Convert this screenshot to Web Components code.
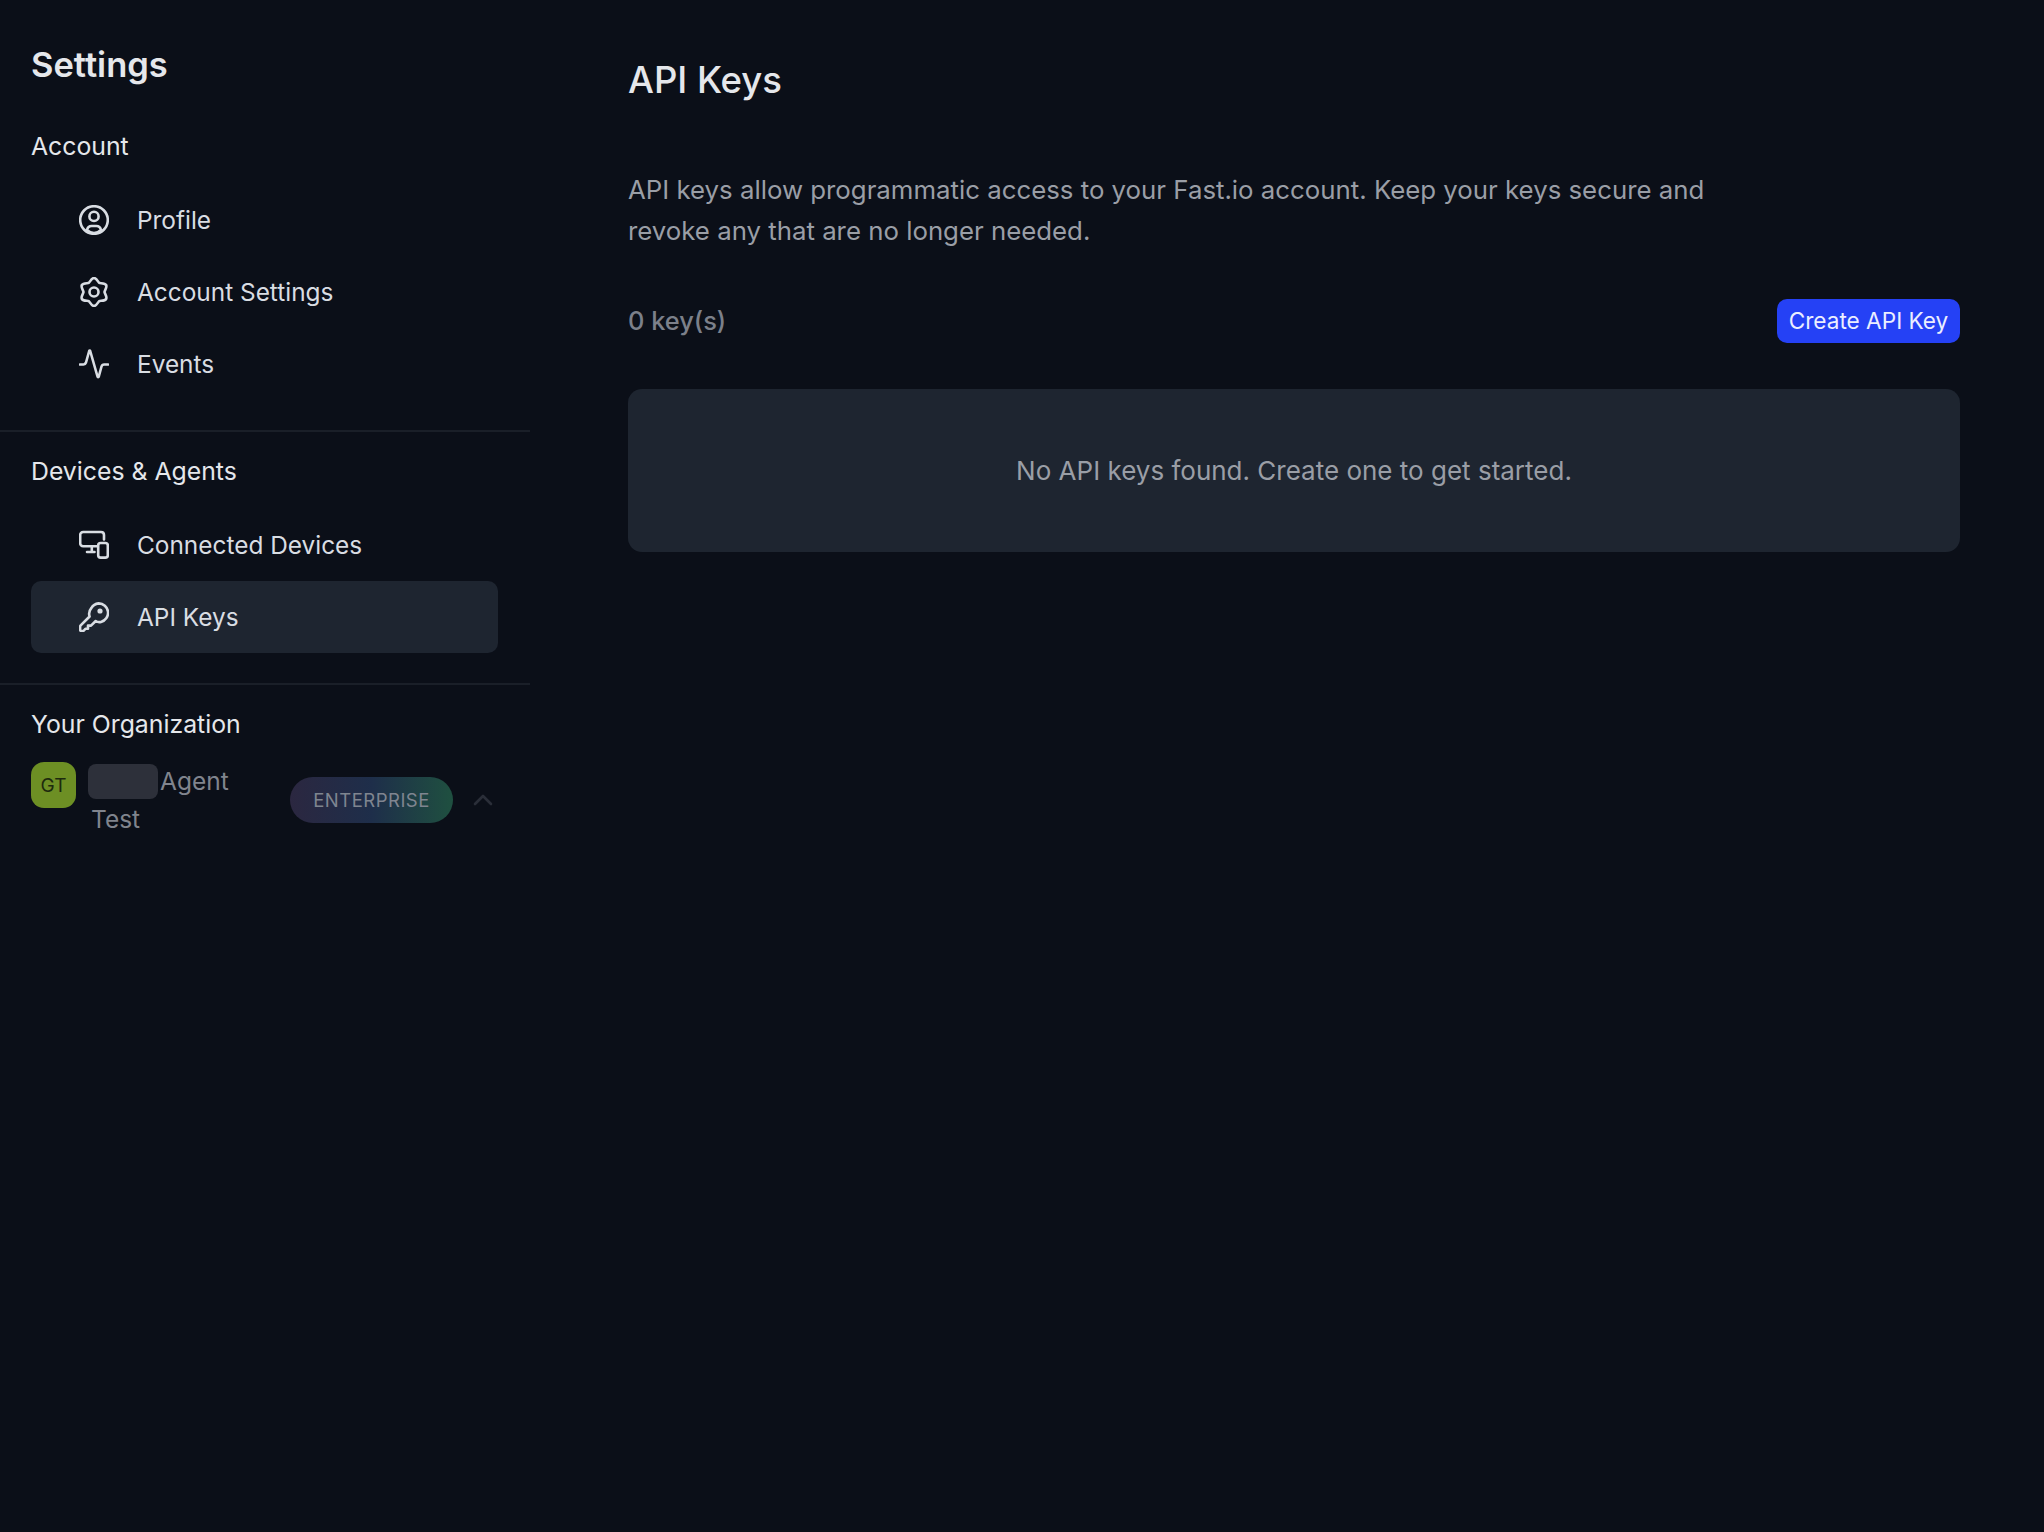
<!DOCTYPE html>
<html>
<head>
<meta charset="utf-8">
<title>API Keys</title>
<style>
  html, body { margin: 0; background: #0b0f18; }
  body { font-family: Inter, "Liberation Sans", sans-serif; color: #e5e7eb; }
</style>
</head>
<body>
<settings-page>
  <settings-sidebar slot="side" heading="Settings">
    <nav-section label="Account">
      <nav-item>
        <svg slot="icon" viewBox="0 0 30 30"><circle cx="15" cy="15" r="13.8"/><circle cx="15" cy="11.4" r="4.6"/><path d="M8 25c.6-2.6 2.4-4 4.6-4h4.8c2.2 0 4 1.4 4.6 4-2 2-4.4 3-7 3s-5-1-7-3z"/></svg>
        Profile
      </nav-item>
      <nav-item>
        <svg slot="icon" viewBox="0 0 30 30"><path d="M15 1C17.6 1 19.21 5.31 20.25 5.91 21.29 6.51 25.82 5.75 27.12 8 28.42 10.25 25.5 13.8 25.5 15 25.5 16.2 28.42 19.75 27.12 22 25.82 24.25 21.29 23.49 20.25 24.09 19.21 24.69 17.6 29 15 29 12.4 29 10.79 24.69 9.75 24.09 8.71 23.49 4.18 24.25 2.88 22 1.58 19.75 4.5 16.2 4.5 15 4.5 13.8 1.58 10.25 2.88 8 4.18 5.75 8.71 6.51 9.75 5.91 10.79 5.31 12.4 1 15 1z"/><circle cx="15" cy="15" r="4.5"/></svg>
        Account Settings
      </nav-item>
      <nav-item>
        <svg slot="icon" viewBox="0 0 30 30"><path d="M1 15.5h3.5c1.2 0 2-.6 2.5-2L10.2 2c.2-.6.8-.6 1 0l7.300 25.5c.2.8 1 .8 1.300 0l2.700-10c.4-1.400 1.200-2 2.600-2H29"/></svg>
        Events
      </nav-item>
    </nav-section>
    <nav-section label="Devices &amp; Agents">
      <nav-item>
        <svg slot="icon" viewBox="0 0 30 30"><path d="M18.5 16.2H4.2c-1.8 0-3-1.2-3-3V5c0-1.800 1.200-3 3-3h17.800c1.800 0 3 1.200 3 3v4.500"/><path d="M8 22h7.500M12.800 16.200V22"/><rect x="19.200" y="13" width="9.600" height="14.600" rx="2.400"/></svg>
        Connected Devices
      </nav-item>
      <nav-item active>
        <svg slot="icon" viewBox="0 0 30 30"><path d="M19.600 1.400a9.400 9.400 0 0 1 2.400 18.500c-1.800.5-3.800.1-5.300-.9L12 23.600h-3v3.200H6.400L4.400 29H2.600c-.9 0-1.500-.6-1.500-1.500v-2.600c0-.6.200-1.100.6-1.500l8.900-8.900c-.9-2.600-.4-5.800 1.700-8.300a9.400 9.400 0 0 1 7.300-4.800z"/><circle cx="21" cy="9" r="1.300" fill="currentColor"/></svg>
        API Keys
      </nav-item>
    </nav-section>
    <nav-section label="Your Organization" last>
      <org-row initials="GT" plan="ENTERPRISE"><span class="name-rest">Agent Test</span></org-row>
    </nav-section>
  </settings-sidebar>
  <api-keys-panel
    heading="API Keys"
    count="0 key(s)"
    action="Create API Key"
    empty="No API keys found. Create one to get started.">
    API keys allow programmatic access to your Fast.io account. Keep your keys secure and revoke any that are no longer needed.
  </api-keys-panel>
</settings-page>

<script>
class SettingsPage extends HTMLElement {
  constructor() {
    super();
    this.attachShadow({ mode: 'open' });
  }
  connectedCallback() {
    this.shadowRoot.innerHTML = `
      <style>
        :host { display: flex; height: 1532px; background: #0b0f18; overflow: hidden; }
        .side { flex: 0 0 530px; }
        .main { flex: 1; min-width: 0; }
      </style>
      <div class="side"><slot name="side"></slot></div>
      <div class="main"><slot></slot></div>
    `;
  }
}
customElements.define('settings-page', SettingsPage);

class SettingsSidebar extends HTMLElement {
  constructor() {
    super();
    this.attachShadow({ mode: 'open' });
  }
  connectedCallback() {
    this.shadowRoot.innerHTML = `
      <style>
        :host { display: block; }
        h2 {
          margin: 0 0 20px;
          padding: 43px 31px 0;
          font-size: 34.5px;
          line-height: 44px;
          font-weight: 600;
          color: #e5e7eb;
        }
      </style>
      <h2>${this.getAttribute('heading')}</h2>
      <slot></slot>
    `;
  }
}
customElements.define('settings-sidebar', SettingsSidebar);

class NavSection extends HTMLElement {
  constructor() {
    super();
    this.attachShadow({ mode: 'open' });
  }
  connectedCallback() {
    this.shadowRoot.innerHTML = `
      <style>
        :host { display: block; padding: 20px 32px 30px 31px; border-bottom: 2px solid #1a1f28; }
        :host([last]) { border-bottom: none; padding-bottom: 0; }
        .label {
          font-size: 24.8px;
          line-height: 38px;
          font-weight: 400;
          color: #e5e7eb;
          margin-bottom: 19px;
        }
      </style>
      <div class="label">${this.getAttribute('label')}</div>
      <slot></slot>
    `;
  }
}
customElements.define('nav-section', NavSection);

class NavItem extends HTMLElement {
  constructor() {
    super();
    this.attachShadow({ mode: 'open' });
  }
  connectedCallback() {
    this.shadowRoot.innerHTML = `
      <style>
        :host {
          display: flex;
          align-items: center;
          gap: 28px;
          height: 72px;
          padding-left: 48px;
          border-radius: 10px;
          font-size: 24.4px;
          color: #d9dde3;
        }
        :host([active]) { background: #1e2530; }
        ::slotted(svg) {
          width: 30px;
          height: 30px;
          flex: none;
          fill: none;
          stroke: currentColor;
          stroke-width: 2.6;
          stroke-linecap: round;
          stroke-linejoin: round;
        }
      </style>
      <slot name="icon"></slot>
      <span><slot></slot></span>
    `;
  }
}
customElements.define('nav-item', NavItem);

class OrgRow extends HTMLElement {
  constructor() {
    super();
    this.attachShadow({ mode: 'open' });
  }
  connectedCallback() {
    this.shadowRoot.innerHTML = `
      <style>
        :host { display: flex; align-items: flex-start; color: #80848d; font-size: 24.5px; }
        .avatar {
          flex: none;
          width: 45px;
          height: 46px;
          border-radius: 13px;
          background: #6d8f24;
          color: #1d2a0e;
          font-size: 19px;
          display: flex;
          align-items: center;
          justify-content: center;
        }
        .name { width: 150px; margin-left: 15px; line-height: 38px; flex: none; }
        .mask {
          display: inline-block;
          vertical-align: top;
          width: 70px;
          height: 35px;
          margin: 2px 2px 0 -3px;
          border-radius: 8px;
          background: #2d303a;
        }
        .plan {
          flex: none;
          margin: 15px 0 0 49px;
          width: 163px;
          height: 46px;
          border-radius: 23px;
          background: linear-gradient(90deg, #2b2740 0%, #1e2e4a 50%, #1f5040 100%);
          display: flex;
          align-items: center;
          justify-content: center;
          font-size: 18.5px;
          letter-spacing: .5px;
          color: #7f8590;
        }
        svg { flex: none; margin: 32px 0 0 20px; width: 20px; height: 12px; fill: none; stroke: #2a2e38; stroke-width: 2.6; stroke-linecap: round; stroke-linejoin: round; }
      </style>
      <div class="avatar">${this.getAttribute('initials')}</div>
      <div class="name"><span class="mask"></span><slot></slot></div>
      <div class="plan">${this.getAttribute('plan')}</div>
      <svg viewBox="0 0 20 12"><path d="M2 10l8-8 8 8"/></svg>
    `;
  }
}
customElements.define('org-row', OrgRow);

class ApiKeysPanel extends HTMLElement {
  constructor() {
    super();
    this.attachShadow({ mode: 'open' });
  }
  connectedCallback() {
    this.shadowRoot.innerHTML = `
      <style>
        :host { display: block; padding: 54px 84px 0 98px; }
        h1 { margin: 0; font-size: 36.5px; line-height: 52px; font-weight: 500; color: #e5e7eb; }
        p {
          margin: 63px 0 0;
          width: 1120px;
          font-size: 25.8px;
          line-height: 41px;
          color: #9a9ea6;
        }
        .bar { display: flex; align-items: center; justify-content: space-between; margin-top: 47px; height: 45px; }
        .count { font-size: 25.4px; font-weight: 500; color: #7c808a; }
        button {
          height: 44px;
          width: 183px;
          padding: 0;
          border: none;
          border-radius: 10px;
          background: #2541f5;
          color: #ebeeff;
          font: inherit;
          font-size: 22.6px;
        }
        .empty {
          margin-top: 46px;
          height: 163px;
          border-radius: 14px;
          background: #1e2530;
          display: flex;
          align-items: center;
          justify-content: center;
          font-size: 26px;
          color: #9a9ea6;
        }
      </style>
      <h1>${this.getAttribute('heading')}</h1>
      <p><slot></slot></p>
      <div class="bar">
        <span class="count">${this.getAttribute('count')}</span>
        <button>${this.getAttribute('action')}</button>
      </div>
      <div class="empty">${this.getAttribute('empty')}</div>
    `;
  }
}
customElements.define('api-keys-panel', ApiKeysPanel);
</script>
</body>
</html>
